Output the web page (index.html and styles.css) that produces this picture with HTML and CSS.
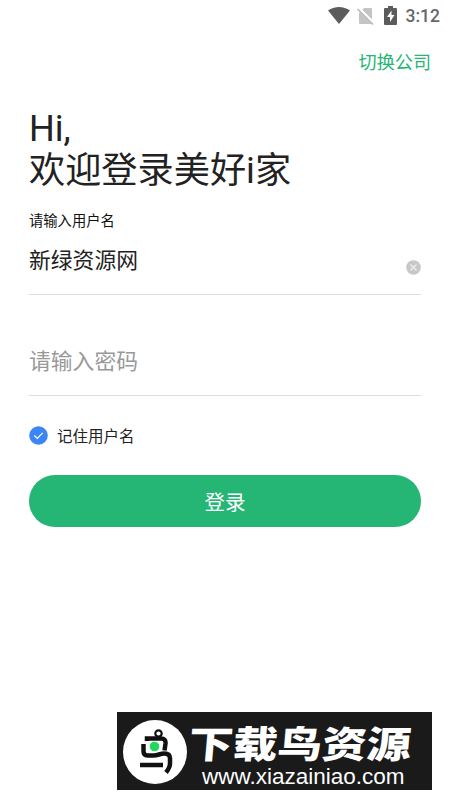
FILE: index.html
```html
<!DOCTYPE html>
<html lang="zh-CN">
<head>
    <meta charset="UTF-8">
    <meta name="viewport" content="width=device-width, initial-scale=1.0">
    <title>登录</title>
    <link rel="stylesheet" href="styles.css">
</head>
<body>
    <div class="status-bar">
        <svg class="wifi" width="22" height="17" viewBox="0 0 22 17"><path d="M0 3.6C6.5-1.2 15.5-1.2 22 3.6L11 17z" fill="#5c5c5c"/></svg>
        <svg class="sim" width="18" height="18" viewBox="0 0 18 18"><path d="M7 1h7q1 0 1 1v14q0 1-1 1H3q-1 0-1-1V6z" fill="#c4c4c4"/><path d="M1 1l16 16" stroke="#fff" stroke-width="3.500"/><path d="M.5 2l15.500 15.500" stroke="#b5b5b5" stroke-width="1.500"/></svg>
        <svg class="battery" width="13" height="19" viewBox="0 0 13 19"><path d="M4 0h5v2h3q1 0 1 1v15q0 1-1 1H1q-1 0-1-1V3q0-1 1-1h3z" fill="#5c5c5c"/><path d="M7.500 4.500L3 11h3v5l4.500-7h-3z" fill="#fff"/></svg>
        <span class="time">3:12</span>
    </div>
    <a class="switch">切换公司</a>

    <form name="frm" class="login-frm">
        <h1>Hi,<br>欢迎登录美好i家</h1>
        <label class="label" for="id">请输入用户名</label>
        <div class="field">
            <input type="text" name="id" id="id" value="新绿资源网">
            <svg class="clear" width="15" height="15" viewBox="0 0 15 15"><circle cx="7.500" cy="7.500" r="7.300" fill="#c8c8c8"/><path d="M4.500 4.500l6 6M10.500 4.500l-6 6" stroke="#f0f0f0" stroke-width="1.100"/></svg>
        </div>
        <div class="field pw">
            <input type="password" name="pw" id="pw" placeholder="请输入密码">
        </div>
        <div class="remember">
            <svg width="19" height="19" viewBox="0 0 19 19"><circle cx="9.500" cy="9.500" r="9.300" fill="#3a86f7"/><path d="M5.300 9.500l3 3 5.400-5.600" fill="none" stroke="#fff" stroke-width="1.200"/></svg>
            <span>记住用户名</span>
        </div>
        <button type="button">登录</button>
    </form>

    <div class="banner">
        <svg class="logo" width="64" height="64" viewBox="0 0 64 64">
            <circle cx="32" cy="32" r="32" fill="#fff"/>
            <g fill="none" stroke="#111" stroke-width="4.500">
                <circle cx="35.500" cy="13.500" r="3.200" stroke-width="2.200"/>
                <path d="M24 21v-2.500h14q5 0 4.500 5l-1 7M20.500 24v7q0 4.500 4 4.500h6c5 0 6-2 11-2q5.500 0 5.500 5v5q0 4-4 9M17 45h23"/>
            </g>
            <circle cx="31.500" cy="26.500" r="4.800" fill="#20d85b"/>
        </svg>
        <div class="banner-text">
            <p class="name">下载鸟资源</p>
            <p class="url">www.xiazainiao.com</p>
        </div>
    </div>
</body>
</html>
```
FILE: styles.css
```css
* {box-sizing: border-box;}
body {margin: 0; height: 800px; display: flex; flex-direction: column; overflow: hidden; background: #fff; color: #222; font-family: Roboto, "Noto Sans CJK SC", sans-serif;}
p, h1 {margin: 0;}
svg {display: block; flex: none;}

.status-bar {display: flex; align-items: center; height: 31px; padding: 0 10px 0 328px;}
.status-bar .sim {margin-left: 7px;}
.status-bar .battery {margin-left: 9px;}
.status-bar .time {margin-left: auto; font-size: 17.500px; font-weight: 500; color: #666;}
.switch {align-self: flex-end; height: 24px; margin: 20px 19px 0 0; line-height: 24px; font-size: 18.100px; color: #25b574;}

.login-frm {display: flex; flex-direction: column; margin: 33px 29px 0;}
.login-frm h1 {height: 84px; font-size: 36.200px; line-height: 42px; font-weight: 400;}
.login-frm .label {height: 20px; margin-top: 19px; line-height: 20px; font-size: 14.300px; color: #111;}
.login-frm .field {display: flex; align-items: center; height: 64px; padding-bottom: 8px; border-bottom: 1px solid #dedede;}
.login-frm .field input {flex: 1; min-width: 0; height: 36px; padding: 0; border: 0; outline: 0; background: none; font: 21.800px Roboto, "Noto Sans CJK SC", sans-serif; color: #222;}
.login-frm .field input::placeholder {color: #999; opacity: 1;}
.login-frm .clear {margin-top: 18px;}
.login-frm .pw {margin-top: 37px; padding-bottom: 4px;}
.login-frm .remember {display: flex; align-items: center; gap: 9px; height: 24px; margin-top: 27px; font-size: 15.500px;}
.login-frm button {height: 52px; margin-top: 28px; padding: 0; border: 0; border-radius: 26px; background: #25b574; color: #fff; font: 20.500px Roboto, "Noto Sans CJK SC", sans-serif;}

.banner {display: flex; width: 315px; height: 78px; margin: auto 0 10px 117px; padding: 8px 6px; background: #1a1a1a; color: #fff;}
.banner-text {margin-left: 2px; white-space: nowrap;}
.banner .name {height: 44px; line-height: 43px; font-size: 44.500px; font-weight: 900; font-family: "Noto Sans CJK SC", sans-serif; transform: skewX(-5deg) scaleY(.84);}
.banner .url {height: 24px; margin-left: 13px; line-height: 25px; font-size: 22.500px; font-family: "Liberation Sans", Arial, sans-serif;}
```
